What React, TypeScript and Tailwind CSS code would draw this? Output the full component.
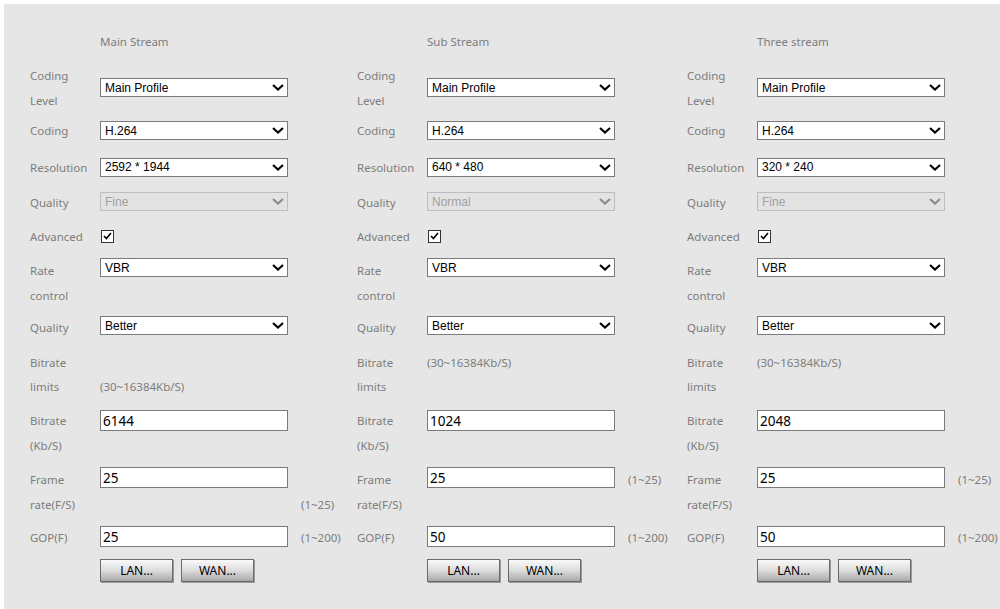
import React from 'react';

type StreamCfg = {
  title: string;
  resolution: string;
  quality: string;
  bitrate: string;
  frame: string;
  gop: string;
  colW: string;
  limitsOnTop: boolean;
  frameHintOnTop: boolean;
};

const streams: StreamCfg[] = [
  { title: 'Main Stream', resolution: '2592 * 1944', quality: 'Fine', bitrate: '6144', frame: '25', gop: '25', colW: 'w-[327px]', limitsOnTop: false, frameHintOnTop: false },
  { title: 'Sub Stream', resolution: '640 * 480', quality: 'Normal', bitrate: '1024', frame: '25', gop: '50', colW: 'w-[330px]', limitsOnTop: true, frameHintOnTop: true },
  { title: 'Three stream', resolution: '320 * 240', quality: 'Fine', bitrate: '2048', frame: '25', gop: '50', colW: 'w-[330px]', limitsOnTop: true, frameHintOnTop: true },
];

const Chevron: React.FC<{ color?: string }> = ({ color = '#000' }) => (
  <svg width="12" height="7" viewBox="0 0 12 7" className="shrink-0">
    <path d="M1 1 L6 5.6 L11 1" fill="none" stroke={color} strokeWidth="2.1" />
  </svg>
);

const Select: React.FC<{ value: string; disabled?: boolean }> = ({ value, disabled }) => (
  <div
    className={`flex items-center justify-between w-[188px] h-[19px] pl-[4px] pr-[3px] border text-[12px] leading-none ${
      disabled ? 'bg-[#e3e3e3] border-[#bdbdbd] text-[#a0a0a0]' : 'bg-white border-[#7a7a7a] text-black'
    }`}
    style={{ fontFamily: '"Liberation Sans", Arial, sans-serif' }}
  >
    <span>{value}</span>
    <Chevron color={disabled ? '#8a8a8a' : '#000'} />
  </div>
);

const TextBox: React.FC<{ value: string; className?: string }> = ({ value, className = '' }) => (
  <input
    readOnly
    value={value}
    className={`w-[188px] h-[21px] bg-white border border-[#7a7a7a] pl-[2px] text-[13.5px] text-black outline-none ${className}`}
  />
);

const Label: React.FC<{ lines: string[]; lh?: string }> = ({ lines, lh = 'leading-[25px]' }) => (
  <div className={`w-[70px] shrink-0 ${lh}`}>
    {lines.map((l) => (
      <div key={l}>{l}</div>
    ))}
  </div>
);

const Hint: React.FC<{ text: string; className?: string }> = ({ text, className = '' }) => (
  <div className={`ml-[13px] leading-[25px] whitespace-nowrap ${className}`}>{text}</div>
);

const Btn: React.FC<{ text: string }> = ({ text }) => (
  <button className="w-[73px] h-[23px] border border-[#6a6a6a] bg-linear-to-b from-[#fafafa] via-[#dcdcdc] to-[#a9a9a9] text-[12px] text-black shadow-[1px_1px_0_#9a9a9a]">
    {text}
  </button>
);

const Column: React.FC<{ s: StreamCfg }> = ({ s }) => (
  <div className={`${s.colW} shrink-0 flex flex-col`}>
    {/* header */}
    <div className="h-[58px] pt-[25px] pl-[70px] leading-[25px]">{s.title}</div>

    <div className="h-[51px] flex items-center">
      <Label lines={['Coding', 'Level']} />
      <Select value="Main Profile" />
    </div>

    <div className="h-[35px] flex items-center">
      <Label lines={['Coding']} />
      <Select value="H.264" />
    </div>

    <div className="h-[38px] flex items-center">
      <Label lines={['Resolution']} />
      <Select value={s.resolution} />
    </div>

    <div className="h-[33px] flex items-center">
      <Label lines={['Quality']} />
      <div className="-mt-[2px]">
        <Select value={s.quality} disabled />
      </div>
    </div>

    <div className="h-[34px] flex items-center">
      <Label lines={['Advanced']} />
      <div className="ml-[1px] w-[13px] h-[13px] border border-[#333] bg-white flex items-center justify-center">
        <svg width="9" height="8" viewBox="0 0 9 8">
          <path d="M1 4 L3.4 6.5 L8 1" fill="none" stroke="#000" strokeWidth="1.6" />
        </svg>
      </div>
    </div>

    <div className="h-[60px] pt-[5px] flex items-start">
      <Label lines={['Rate', 'control']} />
      <Select value="VBR" />
    </div>

    <div className="h-[28px] flex items-center">
      <Label lines={['Quality']} />
      <div className="-mt-[3px]">
        <Select value="Better" />
      </div>
    </div>

    <div className="h-[58px] pt-[10px] flex items-start">
      <Label lines={['Bitrate', 'limits']} lh="leading-[24px]" />
      <div className={`leading-[24px] whitespace-nowrap ${s.limitsOnTop ? '' : 'mt-[24px]'}`}>(30~16384Kb/S)</div>
    </div>

    <div className="h-[60px] pt-[9px] flex items-start">
      <Label lines={['Bitrate', '(Kb/S)']} />
      <TextBox value={s.bitrate} className="mt-[2px]" />
    </div>

    <div className="h-[60px] pt-[8px] flex items-start">
      <Label lines={['Frame', 'rate(F/S)']} />
      <TextBox value={s.frame} />
      <Hint text="(1~25)" className={s.frameHintOnTop ? '' : 'mt-[25px]'} />
    </div>

    <div className="h-[36px] flex items-center">
      <Label lines={['GOP(F)']} />
      <TextBox value={s.gop} className="-mt-[1px]" />
      <Hint text="(1~200)" />
    </div>

    <div className="mt-[4px] pl-[70px] flex gap-[8px]">
      <Btn text="LAN..." />
      <Btn text="WAN..." />
    </div>
  </div>
);

export default function App() {
  return (
    <div
      className="w-screen h-screen overflow-hidden bg-white pl-[4px] pt-[4px] text-[11.5px] text-[#7d7d7d]"
      style={{ fontFamily: '"Noto Sans", "Open Sans", sans-serif' }}
    >
      <div className="h-full bg-[#e6e6e6] pl-[26px] flex">
        {streams.map((s) => (
          <Column key={s.title} s={s} />
        ))}
      </div>
    </div>
  );
}
